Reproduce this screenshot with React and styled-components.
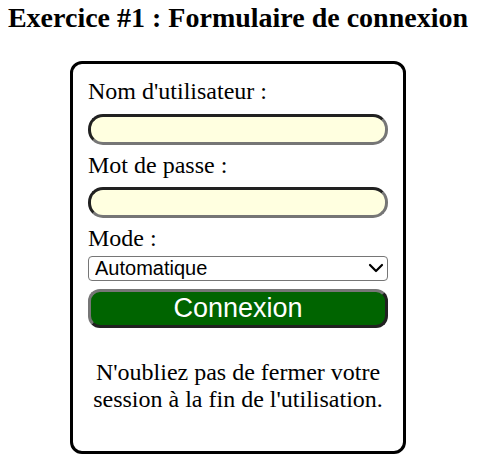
import React from "react";
import styled, { createGlobalStyle } from "styled-components";
import { ChevronDown } from "lucide-react";

const GlobalStyle = createGlobalStyle`
	body {
		margin: 0;
		background: #fff;
		font-family: "Liberation Serif", "Times New Roman", serif;
		color: #000;
	}
`;

function App() {
	return (
		<Page>
			<GlobalStyle />
			<Title>Exercice #1 : Formulaire de connexion</Title>
			<Card>
				<Form onSubmit={(e) => e.preventDefault()}>
					<Label htmlFor="user">Nom d'utilisateur :</Label>
					<Field id="user" type="text" />
					<Label htmlFor="pass">Mot de passe :</Label>
					<Field id="pass" type="password" />
					<Label htmlFor="mode" $tight>
						Mode :
					</Label>
					<SelectWrap>
						<Select id="mode" defaultValue="auto">
							<option value="auto">Automatique</option>
							<option value="manuel">Manuel</option>
						</Select>
						<Arrow size={24} strokeWidth={2.2} />
					</SelectWrap>
					<Submit type="submit">Connexion</Submit>
				</Form>
				<Note>
					N'oubliez pas de fermer votre session à la fin de l'utilisation.
				</Note>
			</Card>
		</Page>
	);
}

export default App;

const Page = styled.main`
	width: 476px;
	display: flex;
	flex-direction: column;
	align-items: center;
`;

const Title = styled.h1`
	margin: 2px 0 0;
	font-size: 28px;
	font-weight: bold;
	white-space: nowrap;
`;

const Card = styled.section`
	margin-top: 27px;
	width: 300px;
	padding: 14px 15px 37px 15px;
	border: 3px solid #000;
	border-radius: 12px;
`;

const Form = styled.form`
	display: flex;
	flex-direction: column;
`;

const Label = styled.label`
	font-size: 24px;
	line-height: 27.6px;
	margin-bottom: ${(p) => (p.$tight ? "3px" : "8px")};
`;

const Field = styled.input`
	box-sizing: border-box;
	width: 300px;
	height: 31px;
	margin: 0 0 7px;
	padding: 1px 12px;
	border: 3px inset #767676;
	border-radius: 15px;
	background: #ffffe0;
	font-size: 20px;
	font-family: "Liberation Sans", Arial, sans-serif;
	outline: none;
`;

const SelectWrap = styled.div`
	position: relative;
	width: 300px;
	height: 25px;
	margin: 0 0 8px;
`;

const Select = styled.select`
	appearance: none;
	-webkit-appearance: none;
	box-sizing: border-box;
	width: 300px;
	height: 25px;
	margin: 0;
	padding: 0 30px 0 6px;
	font-size: 20px;
	font-family: "Liberation Sans", Arial, sans-serif;
	color: #000;
	background: #fff;
	border: 1px solid #767676;
	border-radius: 4px;
`;

const Arrow = styled(ChevronDown)`
	position: absolute;
	right: 0;
	top: 0;
	color: #000;
	pointer-events: none;
`;

const Submit = styled.button`
	box-sizing: border-box;
	width: 300px;
	height: 39px;
	padding: 0;
	border: 3px outset #767676;
	border-radius: 12px;
	background: #006400;
	color: #fff;
	font-size: 27px;
	font-family: "Liberation Sans", Arial, sans-serif;
	cursor: pointer;
`;

const Note = styled.p`
	margin: 31px 0 0;
	font-size: 24px;
	line-height: 27.6px;
	text-align: center;
`;
